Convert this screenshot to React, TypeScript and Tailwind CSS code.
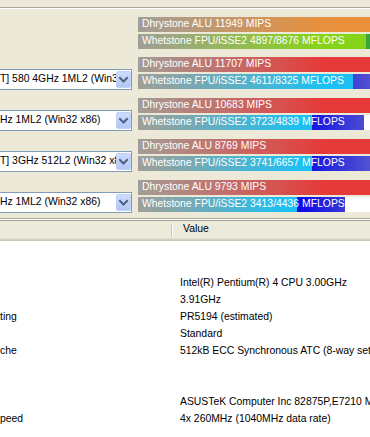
import React from "react";

type Group = {
  dhry: number;
  dColor: string;
  w1: number;
  w2: number;
  wColor: string;
  second: "green" | "blue";
  combo?: string;
};

const groups: Group[] = [
  { dhry: 11949, dColor: "#e8903c", w1: 4897, w2: 8676, wColor: "#86d41a", second: "green" },
  { dhry: 11707, dColor: "#e63a3a", w1: 4611, w2: 8325, wColor: "#1cc0f2", second: "blue", combo: "T] 580 4GHz 1ML2 (Win32 x86)" },
  { dhry: 10683, dColor: "#e63a3a", w1: 3723, w2: 4839, wColor: "#1cc0f2", second: "blue", combo: "Hz 1ML2 (Win32 x86)" },
  { dhry: 8769, dColor: "#e63a3a", w1: 3741, w2: 6657, wColor: "#1cc0f2", second: "blue", combo: "T] 3GHz 512L2 (Win32 x86)" },
  { dhry: 9793, dColor: "#e63a3a", w1: 3413, w2: 4436, wColor: "#1cc0f2", second: "blue", combo: "Hz 1ML2 (Win32 x86)" },
];

const W_SCALE = 21.45;
const D_SCALE = 33;
const GRAY = "#a29e96";

function grad(color: string, width: number) {
  const stop = Math.min(185, width * 0.92);
  return `linear-gradient(to right, ${GRAY} 0px, ${color} ${stop}px)`;
}

function Combo({ text }: { text: string }) {
  return (
    <div className="-ml-[3px] -mb-[1px] w-[135px] h-[21px] border border-[#7f9db9] bg-white flex items-center">
      <div className="flex-1 min-w-0 overflow-hidden whitespace-nowrap pl-[2px] text-black leading-none">{text}</div>
      <div className="w-[15px] h-[17px] rounded-[2px] border border-[#bdd0f7] bg-[linear-gradient(to_bottom,#cddbfd,#b3c7f5)] flex items-center justify-center">
        <svg width="13" height="15" viewBox="0 0 13 15">
          <polyline points="3,6 6.5,9.5 10,6" fill="none" stroke="#4d6185" strokeWidth="2" strokeLinecap="square" />
        </svg>
      </div>
    </div>
  );
}

function Bars({ g }: { g: Group }) {
  const dW = g.dhry / D_SCALE;
  const w1 = g.w1 / W_SCALE;
  const w2 = g.w2 / W_SCALE - w1;
  const secondBg =
    g.second === "green"
      ? "#3aa53a"
      : `linear-gradient(to right, #0a0ae6 ${162 - w1}px, #5252d2 ${232 - w1}px)`;
  return (
    <div className="w-[320px] flex flex-col gap-[2px]">
      <div className="relative h-[15px] bg-white flex overflow-hidden">
        <div className="h-full shrink-0" style={{ width: dW, background: grad(g.dColor, dW) }} />
        <div className="absolute inset-0 pl-[4px] flex items-center text-white whitespace-nowrap leading-none">
          Dhrystone ALU {g.dhry} MIPS
        </div>
      </div>
      <div className="relative h-[15px] bg-white flex overflow-hidden">
        <div className="h-full shrink-0" style={{ width: w1, background: grad(g.wColor, w1) }} />
        <div className="h-full shrink-0" style={{ width: w2, background: secondBg }} />
        <div className="absolute inset-0 pl-[4px] flex items-center text-white whitespace-nowrap leading-none">
          Whetstone FPU/iSSE2 {g.w1}/{g.w2} MFLOPS
        </div>
      </div>
    </div>
  );
}

const rows: [string, string][] = [
  ["", ""],
  ["", ""],
  ["", "Intel(R) Pentium(R) 4 CPU 3.00GHz"],
  ["", "3.91GHz"],
  ["ting", "PR5194 (estimated)"],
  ["", "Standard"],
  ["che", "512kB ECC Synchronous ATC (8-way set, 64 byte line size)"],
  ["", ""],
  ["", ""],
  ["", "ASUSTeK Computer Inc 82875P,E7210 Mainboard"],
  ["peed", "4x 260MHz (1040MHz data rate)"],
  ["", ""],
];

export default function App() {
  return (
    <div className="w-[370px] h-[437px] overflow-hidden bg-[#ece9d8] flex flex-col text-[10.4px] font-['Liberation_Sans',Arial,sans-serif]">
      <div className="h-[7px] shrink-0" />
      <div className="h-[1px] shrink-0 bg-[#aca899]" />
      <div className="h-[1px] shrink-0 bg-white" />
      <div className="flex flex-col shrink-0 pt-[8px]">
        {groups.map((g, i) => (
          <div key={i} className={`flex h-[32px] ${i === 0 ? "" : i === 1 ? "mt-[8px]" : "mt-[9px]"}`}>
            <div className="w-[132px] shrink-0 flex items-end">{g.combo ? <Combo text={g.combo} /> : null}</div>
            <div className="ml-[6px] shrink-0">
              <Bars g={g} />
            </div>
          </div>
        ))}
      </div>
      <div className="h-[6px] shrink-0" />
      <div className="h-[1px] shrink-0 bg-[#aca899]" />
      <div className="h-[1px] shrink-0 bg-white" />
      <div className="h-[1px] shrink-0 bg-[#a5a294]" />
      <div className="shrink-0 flex flex-col">
        <div className="h-[17px] bg-[#ebeadb] flex items-end">
          <div className="w-[171px] shrink-0" />
          <div className="w-[1px] h-[14px] bg-[#c7c5b2] shrink-0" />
          <div className="w-[1px] h-[14px] bg-white shrink-0" />
          <div className="pl-[10px] h-full flex items-center text-black leading-none whitespace-nowrap">Value</div>
        </div>
        <div className="h-[1px] bg-[#e2decd]" />
        <div className="h-[1px] bg-[#d6d2c2]" />
        <div className="h-[1px] bg-[#cbc7b8]" />
      </div>
      <div className="flex-1 bg-white flex flex-col">
        {rows.map(([f, v], i) => (
          <div key={i} className="h-[17px] shrink-0 flex items-center text-black whitespace-nowrap leading-none">
            <div className="w-[172px] shrink-0 overflow-hidden">{f}</div>
            <div className="pl-[8px]">{v}</div>
          </div>
        ))}
      </div>
    </div>
  );
}
